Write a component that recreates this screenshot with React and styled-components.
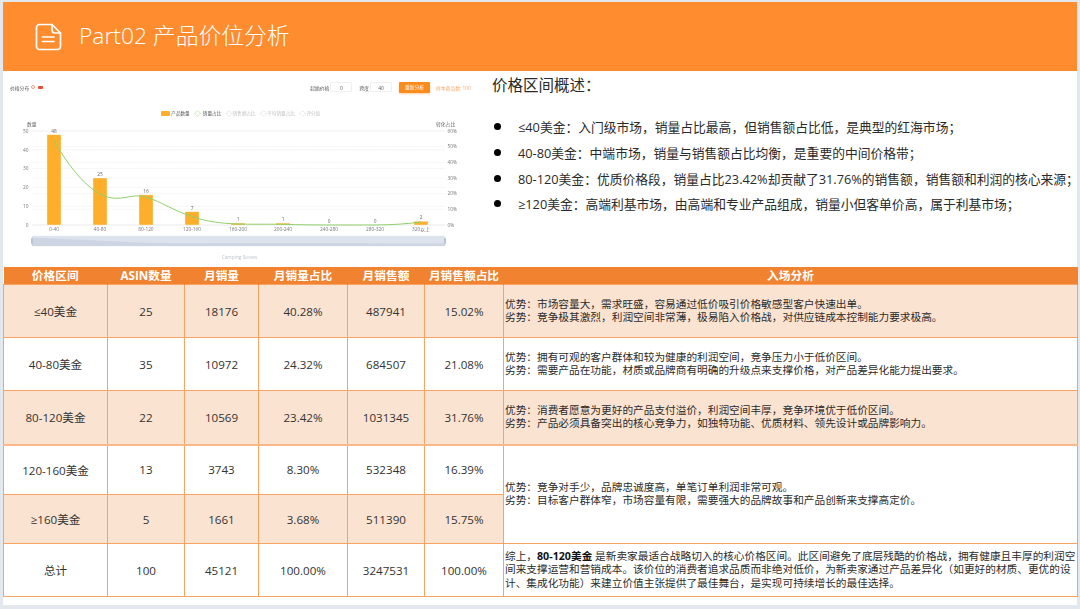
import React from 'react';
import styled, { createGlobalStyle } from 'styled-components';

const FONT = `"Open Sans", "Noto Sans CJK SC", sans-serif`;

const GlobalStyle = createGlobalStyle`
	html, body {
		margin: 0;
		padding: 0;
		background: #e2e8ee;
		font-family: ${FONT};
	}
`;

const Page = styled.div`
	width: 1080px;
	height: 609px;
	overflow: hidden;
	padding: 2px 3px 0;
	box-sizing: border-box;
`;

const Slide = styled.div`
	width: 1074px;
	height: 603px;
	background: #fff;
`;

const Banner = styled.header`
	display: flex;
	align-items: center;
	gap: 17px;
	height: 69px;
	padding-left: 32px;
	background: #ff8c2f;
	color: #fff;
`;

const Title = styled.h1`
	margin: 0;
	font-size: 22.8px;
	font-weight: 300;
	line-height: 1;
`;

const Upper = styled.section`
	display: flex;
	height: 196px;
`;

const ChartPanel = styled.div`
	width: 477px;
	flex: none;
	filter: blur(0.45px);
`;

const Toolbar = styled.div`
	display: flex;
	align-items: center;
	height: 14px;
	margin-top: 9px;
	padding-left: 7px;
	font-size: 4.8px;
	color: #555;
`;

const PriceLabel = styled.span`
	display: flex;
	align-items: center;
	margin-right: auto;
`;

const InfoDot = styled.i`
	width: 4px;
	height: 4px;
	margin-left: 2px;
	border: 0.6px solid #f0a080;
	border-radius: 50%;
	box-sizing: border-box;
`;

const RedFlag = styled.i`
	width: 5px;
	height: 3px;
	margin-left: 3px;
	border-radius: 1px;
	background: #ea4b35;
`;

const FieldLabel = styled.span`
	margin-right: 1px;
`;

const Field = styled.span`
	width: 22px;
	height: 10px;
	line-height: 10px;
	margin-right: 7px;
	text-align: center;
	border: 1px solid #f0f0f0;
	box-sizing: border-box;
	border-radius: 1px;
`;

const AnalyzeButton = styled.span`
	width: 31px;
	height: 11px;
	line-height: 11px;
	text-align: center;
	color: #fff;
	background: #fa8c1e;
	border-radius: 1px;
	box-shadow: 0 1px 2px rgba(250, 140, 30, 0.4);
`;

const SampleCount = styled.span`
	width: 44px;
	margin-left: 6px;
	color: #f7a868;
`;

const Legend = styled.div`
	display: flex;
	align-items: center;
	justify-content: center;
	gap: 4px;
	height: 8px;
	margin-top: 15px;
	padding-right: 2px;
	font-size: 4.6px;
`;

const LegendItem = styled.span`
	display: flex;
	align-items: center;
	gap: 1.5px;
	color: ${(p) => p.$color};
`;

const LegendMark = styled.span`
	color: ${(p) => p.$color};
`;

const Swatch = styled.i`
	width: 9px;
	height: 5px;
	background: #fdae2a;
	border-radius: 1px;
`;

const ChartSvg = styled.svg`
	display: block;
	width: 477px;
	height: 147px;
	margin-top: 3px;
`;

const Overview = styled.div`
	flex: 1;
	padding-left: 12px;
	color: #2a2a2a;
`;

const OverviewTitle = styled.h2`
	margin: 0;
	padding-top: 3px;
	font-size: 15.5px;
	font-weight: 400;
	line-height: 22px;
`;

const BulletList = styled.ul`
	list-style: none;
	margin: 18px 0 0;
	padding: 0;
`;

const Bullet = styled.li`
	display: flex;
	align-items: center;
	height: 25.7px;
	font-size: 12.78px;
	white-space: nowrap;
	&::before {
		content: "";
		flex: none;
		width: 7px;
		height: 7px;
		margin: 0 17px 0 2px;
		border-radius: 50%;
		background: #000;
	}
`;

const Table = styled.table`
	width: 1074px;
	table-layout: fixed;
	border-collapse: collapse;
	color: #333;
`;

const HeadCell = styled.th`
	height: 17px;
	padding: 0;
	font-size: 11.7px;
	font-weight: 700;
	line-height: 17px;
	color: #fff;
	background: #f08230;
	border-right: 1px solid #f08230;
`;

const Row = styled.tr`
	height: ${(p) => p.$height}px;
`;

const Cell = styled.td`
	padding: 0;
	font-size: 11.6px;
	text-align: center;
	background: ${(p) => (p.$tinted ? '#fbe3d1' : '#fff')};
	border: 1px solid #f8a263;
	border-top: ${(p) => (p.$heavyTop ? '2px solid #f9b88a' : '1px solid #f8a263')};
`;

const NoteCell = styled(Cell)`
	padding: 0 1px;
	font-size: 10.68px;
	line-height: 13.3px;
	text-align: left;
	color: #2b2b2b;
	strong {
		font-weight: 700;
		color: #111;
	}
`;

const COLUMNS = [
	{ title: '价格区间', width: 104 },
	{ title: 'ASIN数量', width: 77 },
	{ title: '月销量', width: 74 },
	{ title: '月销量占比', width: 89 },
	{ title: '月销售额', width: 77 },
	{ title: '月销售额占比', width: 79 },
	{ title: '入场分析', width: 574 },
];

const ROWS = [
	{
		height: 53,
		tinted: true,
		cells: ['≤40美金', '25', '18176', '40.28%', '487941', '15.02%'],
		note: ['优势\uFF1A市场容量大\uFF0C需求旺盛\uFF0C容易通过低价吸引价格敏感型客户快速出单。', '劣势\uFF1A竞争极其激烈\uFF0C利润空间非常薄\uFF0C极易陷入价格战\uFF0C对供应链成本控制能力要求极高。'],
	},
	{
		height: 53,
		cells: ['40-80美金', '35', '10972', '24.32%', '684507', '21.08%'],
		note: ['优势\uFF1A拥有可观的客户群体和较为健康的利润空间\uFF0C竞争压力小于低价区间。', '劣势\uFF1A需要产品在功能\uFF0C材质或品牌商有明确的升级点来支撑价格\uFF0C对产品差异化能力提出要求。'],
	},
	{
		height: 54,
		tinted: true,
		cells: ['80-120美金', '22', '10569', '23.42%', '1031345', '31.76%'],
		note: ['优势\uFF1A消费者愿意为更好的产品支付溢价\uFF0C利润空间丰厚\uFF0C竞争环境优于低价区间。', '劣势\uFF1A产品必须具备突出的核心竞争力\uFF0C如独特功能、优质材料、领先设计或品牌影响力。'],
	},
	{
		height: 50,
		heavyTop: true,
		cells: ['120-160美金', '13', '3743', '8.30%', '532348', '16.39%'],
		note: ['优势\uFF1A竞争对手少\uFF0C品牌忠诚度高\uFF0C单笔订单利润非常可观。', '劣势\uFF1A目标客户群体窄\uFF0C市场容量有限\uFF0C需要强大的品牌故事和产品创新来支撑高定价。'],
		noteSpan: 2,
	},
	{
		height: 49,
		tinted: true,
		cells: ['≥160美金', '5', '1661', '3.68%', '511390', '15.75%'],
	},
	{
		height: 53,
		cells: ['总计', '100', '45121', '100.00%', '3247531', '100.00%'],
		summary: true,
	},
];

const BULLETS = [
	'≤40美金\uFF1A入门级市场\uFF0C销量占比最高\uFF0C但销售额占比低\uFF0C是典型的红海市场\uFF1B',
	'40-80美金\uFF1A中端市场\uFF0C销量与销售额占比均衡\uFF0C是重要的中间价格带\uFF1B',
	'80-120美金\uFF1A优质价格段\uFF0C销量占比23.42%却贡献了31.76%的销售额\uFF0C销售额和利润的核心来源\uFF1B',
	'≥120美金\uFF1A高端利基市场\uFF0C由高端和专业产品组成\uFF0C销量小但客单价高\uFF0C属于利基市场\uFF1B',
];

const BARS = [
	{ x: 54, value: 48, label: '0-40' },
	{ x: 100, value: 25, label: '40-80' },
	{ x: 146, value: 16, label: '80-120' },
	{ x: 192, value: 7, label: '120-160' },
	{ x: 238, value: 1, label: '160-200' },
	{ x: 283, value: 1, label: '200-240' },
	{ x: 329, value: 0, label: '240-280' },
	{ x: 375, value: 0, label: '280-320' },
	{ x: 421, value: 2, label: '320以上' },
];

const AXIS_BOTTOM = 225;
const UNIT = 1.88;

function FileIcon() {
	return (
		<svg width="27" height="28" viewBox="0 0 27 28" fill="none" stroke="#fff" strokeWidth="1.7" strokeLinecap="round" strokeLinejoin="round">
			<path d="M17 1.5H4.5a3 3 0 0 0-3 3v19a3 3 0 0 0 3 3h18a3 3 0 0 0 3-3V10z" />
			<path d="M17 1.5V7a3 3 0 0 0 3 3h5.500" />
			<path d="M7.500 14h11.500M7.500 18.500h11.500" />
		</svg>
	);
}

function PriceChart() {
	const left = [0, 10, 20, 30, 40, 50];
	const right = [0, 10, 20, 30, 40, 50, 60];
	return (
		<ChartSvg viewBox="3 120 477 147" fontFamily={FONT}>
			{left.map((v) => {
				const y = AXIS_BOTTOM - v * UNIT;
				return (
					<g key={v}>
						{v > 0 && <line x1="32" x2="445" y1={y} y2={y} stroke="#efefef" strokeWidth="0.6" />}
						<text x="28.500" y={y + 1.7} fontSize="4.800" fill="#777" textAnchor="end">{v}</text>
					</g>
				);
			})}
			{right.map((v) => {
				const y = AXIS_BOTTOM - (v * 94) / 60;
				return (
					<g key={v}>
						{v > 0 && <line x1="32" x2="445" y1={y} y2={y} stroke="#e6e6e6" strokeWidth="0.5" strokeDasharray="1.500 1" />}
						<text x="447.500" y={y + 1.7} fontSize="4.800" fill="#777">{v}%</text>
					</g>
				);
			})}
			<text x="27" y="125.500" fontSize="4.800" fill="#666">数量</text>
			<text x="436" y="125.500" fontSize="4.800" fill="#666">转化占比</text>
			<line x1="32" x2="445" y1={AXIS_BOTTOM} y2={AXIS_BOTTOM} stroke="#dcdcdc" strokeWidth="0.6" />
			{BARS.map((b) => {
				const h = b.value * UNIT;
				return (
					<g key={b.label}>
						{h > 0 && <rect x={b.x - 7} y={AXIS_BOTTOM - h} width="14" height={h} fill="#fdae2a" stroke="#fff3dc" strokeWidth="0.4" />}
						<text x={b.x} y={AXIS_BOTTOM - h - 2} fontSize="4.800" fill="#666" textAnchor="middle">{b.value}</text>
						<text x={b.x} y="230.500" fontSize="4.800" fill="#777" textAnchor="middle">{b.label}</text>
					</g>
				);
			})}
			<path
				d="M54 140.500C66 162 82 184 100 194C109 199 118 199 128 197C136 195.500 141 195.500 146 197C162 202 174 211 192 216.500C206 221.500 222 223.500 238 224C254 224.500 268 224 283 224.300C300 224.800 315 225 329 225C345 225 360 225 375 225C392 224.800 406 224 421 222"
				fill="none"
				stroke="#8fd06a"
				strokeWidth="1"
			/>
			<rect x="32" y="236" width="413" height="10" fill="#dde3ed" stroke="#e8ebf1" strokeWidth="0.5" />
			<path d="M32 237.500L150 243L445 243.500V246H32z" fill="#cdd5e2" />
			<rect x="31" y="238" width="2" height="6" rx="1" fill="#b8c3d6" />
			<rect x="444" y="238" width="2" height="6" rx="1" fill="#b8c3d6" />
			<text x="239.500" y="259" fontSize="4.800" fill="#bcc3cd" textAnchor="middle">Camping Stoves</text>
		</ChartSvg>
	);
}

function App() {
	return (
		<Page>
			<GlobalStyle />
			<Slide>
				<Banner>
					<FileIcon />
					<Title>Part02 产品价位分析</Title>
				</Banner>
				<Upper>
					<ChartPanel>
						<Toolbar>
							<PriceLabel>价格分布<InfoDot /><RedFlag /></PriceLabel>
							<FieldLabel>起始价格</FieldLabel>
							<Field>0</Field>
							<FieldLabel>跨度</FieldLabel>
							<Field>40</Field>
							<AnalyzeButton>重新分析</AnalyzeButton>
							<SampleCount>样本商品数: 100</SampleCount>
						</Toolbar>
						<Legend>
							<LegendItem $color="#555"><Swatch />产品数量</LegendItem>
							<LegendItem $color="#555"><LegendMark $color="#7ccb5a">-○-</LegendMark>销量占比</LegendItem>
							<LegendItem $color="#c4c4c4">-○-销售额占比</LegendItem>
							<LegendItem $color="#c4c4c4">-○-平均销量占比</LegendItem>
							<LegendItem $color="#c4c4c4">-○-评分值</LegendItem>
						</Legend>
						<PriceChart />
					</ChartPanel>
					<Overview>
						<OverviewTitle>{'价格区间概述\uFF1A'}</OverviewTitle>
						<BulletList>
							{BULLETS.map((text) => <Bullet key={text}>{text}</Bullet>)}
						</BulletList>
					</Overview>
				</Upper>
				<Table>
					<colgroup>
						{COLUMNS.map((c) => <col key={c.title} width={c.width} />)}
					</colgroup>
					<thead>
						<tr>
							{COLUMNS.map((c) => <HeadCell key={c.title}>{c.title}</HeadCell>)}
						</tr>
					</thead>
					<tbody>
						{ROWS.map((row) => (
							<Row key={row.cells[0]} $height={row.height}>
								{row.cells.map((text, i) => <Cell key={i} $tinted={row.tinted} $heavyTop={row.heavyTop}>{text}</Cell>)}
								{row.note && (
									<NoteCell $tinted={row.tinted} $heavyTop={row.heavyTop} rowSpan={row.noteSpan}>
										{row.note[0]}<br />{row.note[1]}
									</NoteCell>
								)}
								{row.summary && (
									<NoteCell>
										{'综上\uFF0C'}<strong>80-120美金</strong>{' 是新卖家最适合战略切入的核心价格区间。此区间避免了底层残酷的价格战\uFF0C拥有健康且丰厚的利润空间来支撑运营和营销成本。该价位的消费者追求品质而非绝对低价\uFF0C为新卖家通过产品差异化\uFF08如更好的材质、更优的设计、集成化功能\uFF09来建立价值主张提供了最佳舞台\uFF0C是实现可持续增长的最佳选择。'}
									</NoteCell>
								)}
							</Row>
						))}
					</tbody>
				</Table>
			</Slide>
		</Page>
	);
}

export default App;
